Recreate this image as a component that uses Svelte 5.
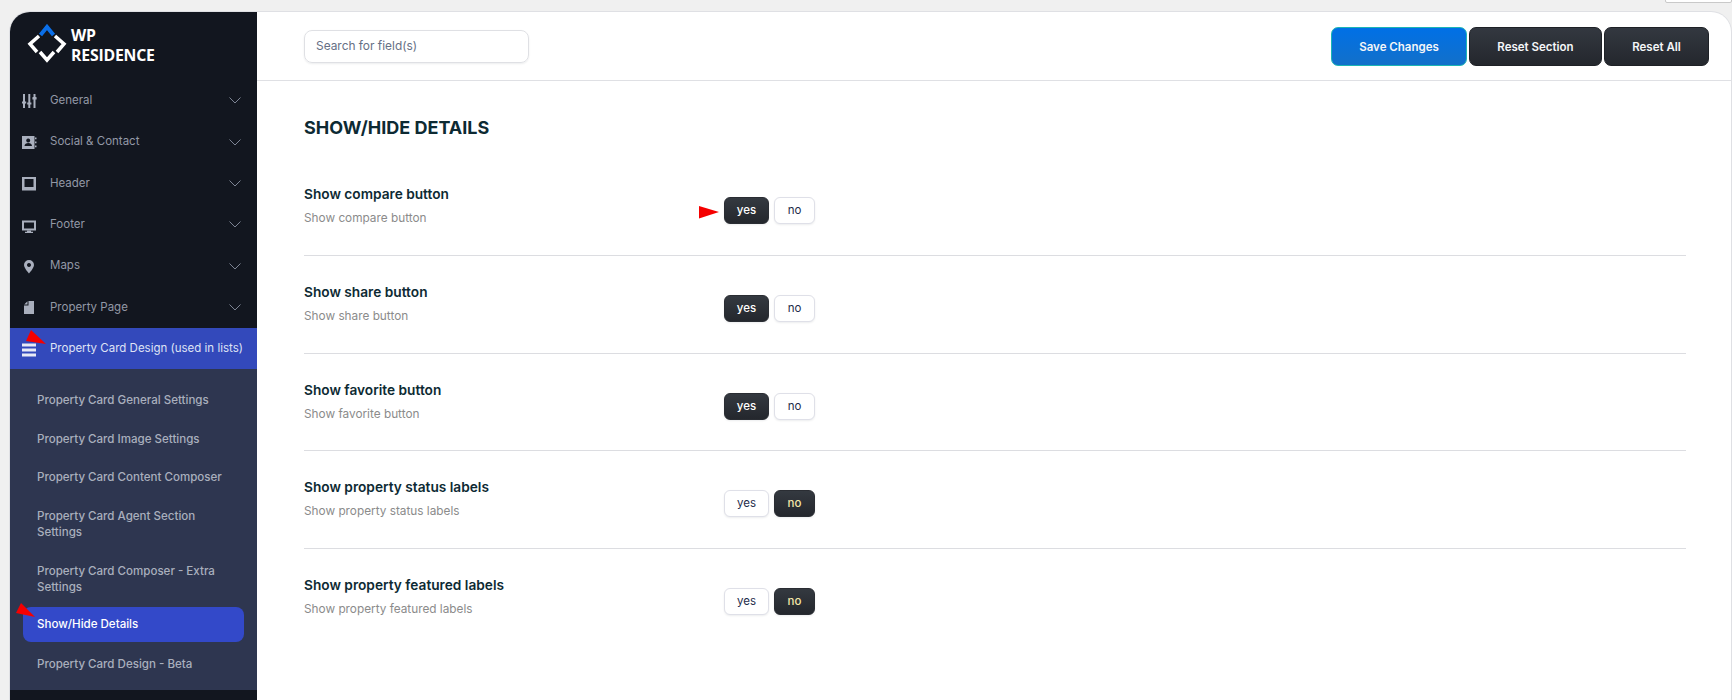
<script>
  const nav = [
    { label: 'General', icon: 'sliders' },
    { label: 'Social & Contact', icon: 'contact' },
    { label: 'Header', icon: 'header' },
    { label: 'Footer', icon: 'desktop' },
    { label: 'Maps', icon: 'pin' },
    { label: 'Property Page', icon: 'file' }
  ];
  const sub = [
    { label: 'Property Card General Settings' },
    { label: 'Property Card Image Settings' },
    { label: 'Property Card Content Composer' },
    { label: 'Property Card Agent Section Settings' },
    { label: 'Property Card Composer - Extra Settings' },
    { label: 'Show/Hide Details', active: true },
    { label: 'Property Card Design - Beta' }
  ];
  const rows = [
    { title: 'Show compare button', yes: true },
    { title: 'Show share button', yes: true },
    { title: 'Show favorite button', yes: true },
    { title: 'Show property status labels', yes: false },
    { title: 'Show property featured labels', yes: false }
  ];
</script>

<div class="chip"></div>
<div class="page">
  <div class="frame">
    <aside class="side">
      <div class="logo">
        <svg width="42" height="42" viewBox="27 24 42 42">
          <path d="M40.500 35 47 27 53.500 35" fill="none" stroke="#0b6fe8" stroke-width="4" />
          <path d="M39 36 30 44 37 52M55 36 64 44 57 52M40 52 47 60 54 52" fill="none" stroke="#fff" stroke-width="3.500" />
        </svg>
        <div class="logotext">WP<br />RESIDENCE</div>
      </div>
      <nav>
        {#each nav as n}
          <div class="item">
            <svg class="ico" width="16" height="16" viewBox="0 0 16 16" fill="#a9afbd">
              {#if n.icon === 'sliders'}
                <path d="M2 1h2v14h-2zM7.300 1h2v14h-2zM12.500 1h2v14h-2zM1 8.500h4.200v2h-1l-1.100 1.500-1.100-1.500h-1zM6.200 9.500h4.200v2h-1l-1.100 1.500-1.100-1.500h-1zM11.400 6.500v-2l2.100-2.500 2.100 2.500v2z" />
              {:else if n.icon === 'contact'}
                <path fill-rule="evenodd" d="M1 1h12.500v13h-12.500zM7.200 3.500a2 2 0 1 0 .01 0zM3.500 11h7.500c0-2-1.700-3-3.700-3s-3.800 1-3.800 3z" /><path d="M14 2.500h1.500v1.800h-1.500zM14 6.500h1.500v1.800h-1.500zM14 10.500h1.500v1.800h-1.500z" />
              {:else if n.icon === 'header'}
                <path fill-rule="evenodd" d="M1 1h14v13.500h-14zM3.500 3v8h9v-8z" />
              {:else if n.icon === 'desktop'}
                <path fill-rule="evenodd" d="M1 2.500h14v10h-14zM3 4.500v6h10v-6z" /><path d="M6 12.500h4v1.200h2v1.300h-8v-1.300h2z" />
              {:else if n.icon === 'pin'}
                <path fill-rule="evenodd" d="M8 1a5 5 0 0 0-5 5c0 3 5 8.500 5 8.500s5-5.500 5-8.500a5 5 0 0 0-5-5zM8 4a2 2 0 1 1-.01 0z" />
              {:else}
                <path d="M7.500 1h5.500v13h-10v-8.500h4.500zM6.500 1.200v3.300h-3.300z" />
              {/if}
            </svg>
            <span>{n.label}</span>
            <svg class="chev" width="12" height="7" viewBox="0 0 12 7"><path d="M.5.500 6 6 11.500.5" fill="none" stroke="#7d8494" stroke-width="1" /></svg>
          </div>
        {/each}
        <div class="item open">
          <svg class="ico" width="16" height="16" viewBox="0 0 16 16" fill="#e8eaf5"><path d="M1 1.500h14v3h-14zM1 6.500h14v3h-14zM1 11.500h14v3h-14z" /></svg>
          <span>Property Card Design (used in lists)</span>
          <svg class="mark mark1" width="21" height="15" viewBox="0 0 21 15"><path d="M5 0 0 11 20 14z" fill="#f50000" /></svg>
        </div>
        <div class="subnav">
          {#each sub as s}
            <div class="subitem" class:active={s.active}>
              {s.label}
              {#if s.active}
                <svg class="mark mark2" width="20" height="15" viewBox="0 0 20 15"><path d="M5 0 0 10 19 14z" fill="#f50000" /></svg>
              {/if}
            </div>
          {/each}
        </div>
      </nav>
    </aside>
    <main>
      <header class="top">
        <div class="search">Search for field(s)</div>
        <div class="actions">
          <button class="btn save">Save Changes</button>
          <button class="btn reset rs">Reset Section</button>
          <button class="btn reset ra">Reset All</button>
        </div>
      </header>
      <section class="content">
        <h1>SHOW/HIDE DETAILS</h1>
        {#each rows as r, i}
          <div class="row">
            <div class="info">
              <div class="title">{r.title}</div>
              <div class="desc">{r.title}</div>
            </div>
            <div class="toggle">
              {#if i === 0}
                <svg class="arrow" width="21" height="13" viewBox="0 0 21 13"><path d="M0 0 20 6 0 12.500z" fill="#f50000" /></svg>
              {/if}
              <span class="opt yes" class:on={r.yes}>yes</span>
              <span class="opt no" class:on={!r.yes}>no</span>
            </div>
          </div>
        {/each}
      </section>
    </main>
  </div>
</div>

<style>
  :global(body) {
    margin: 0;
    background: #f0f0f0;
    font-family: Inter, "Liberation Sans", sans-serif;
    overflow: hidden;
  }
  .chip {
    position: absolute;
    left: 1665px;
    top: -6px;
    width: 65px;
    height: 7px;
    background: #fff;
    border: 1px solid #c9c9c9;
    border-radius: 2px;
  }
  .page {
    height: 700px;
    padding: 12px 0 0 10px;
    box-sizing: border-box;
    overflow: hidden;
  }
  .frame {
    display: flex;
    width: 1721px;
    height: 720px;
    background: #fff;
    border-top-left-radius: 20px;
    border-top-right-radius: 20px;
    box-shadow: 0 0 0 1px #dfe0e4;
    overflow: hidden;
  }
  .side {
    width: 247px;
    flex: none;
    background: #12161f;
    color: #9298a6;
  }
  .logo {
    height: 58.200px;
    padding: 9px 0 0 17px;
    display: flex;
    gap: 2px;
  }
  .logo svg { margin-top: 3px; }
  .logotext {
    font-family: "Open Sans", sans-serif;
    font-weight: 700;
    font-size: 15.800px;
    line-height: 20px;
    color: #fff;
    padding-top: 4px;
    letter-spacing: -0.2px;
  }
  .item {
    height: 41.400px;
    display: flex;
    align-items: center;
    padding-left: 11px;
    font-size: 11.500px;
    position: relative;
  }
  .item span { margin-left: 13px; }
  .ico { flex: none; margin-top: 3px; }
  .chev { position: absolute; left: 219px; top: 18px; }
  .open {
    background: #3349bb;
    color: #dfe3f5;
    height: 41.400px;
  }
  .mark { position: absolute; }
  .mark1 { left: 16px; top: 2px; }
  .subnav {
    background: #2e3650;
    padding: 13px 13px 9px;
    height: 321px;
    box-sizing: border-box;
  }
  .subitem {
    padding: 10px 14px;
    font-size: 11.550px;
    line-height: 16px;
    font-weight: 500;
    color: #a9afbd;
    border-radius: 8px;
    position: relative;
    margin-bottom: 2.700px;
  }
  .active {
    background: #3349c9;
    color: #fff;
    height: 35px;
    box-sizing: border-box;
    padding: 9px 14px;
    margin-top: 2px;
    margin-bottom: 3.700px;
  }
  .mark2 { left: -7px; top: -4px; }
  main { flex: 1; min-width: 0; }
  .top {
    height: 68px;
    border-bottom: 1px solid #dfe0e4;
    display: flex;
    align-items: center;
    justify-content: space-between;
    padding: 0 22px 0 47px;
  }
  .search {
    width: 225px;
    height: 33px;
    margin-top: 1px;
    box-sizing: border-box;
    border: 1px solid #dfe0e4;
    border-radius: 8px;
    box-shadow: 0 1px 2px rgba(16, 24, 40, 0.08);
    padding: 0 11px;
    line-height: 29px;
    font-size: 11.900px;
    color: #667085;
  }
  .actions { display: flex; gap: 2px; margin-top: 1px; }
  .btn {
    height: 39px;
    border-radius: 7px;
    font: 600 11.500px Inter, sans-serif;
    color: #f5f6f8;
    padding: 0;
    cursor: pointer;
  }
  .save {
    width: 136px;
    background: linear-gradient(#0070e6, #1370c9);
    border: 1px solid #1cb5b5;
  }
  .reset {
    background: linear-gradient(#333840, #24272d);
    border: 1px solid #1e2126;
  }
  .rs { width: 133px; }
  .ra { width: 105px; }
  .content { padding: 0 45px 0 47px; }
  h1 {
    margin: 0;
    padding-top: 37px;
    height: 40.400px;
    font-size: 18px;
    line-height: 20px;
    font-weight: 700;
    color: #0d2a33;
  }
  .row {
    height: 97.600px;
    box-sizing: border-box;
    padding-top: 27px;
    border-bottom: 1px solid #dcdde1;
    display: flex;
    position: relative;
  }
  .row:last-child { border-bottom: 0; }
  .info { width: 420px; }
  .title {
    font-size: 13.700px;
    line-height: 18px;
    font-weight: 600;
    color: #0d2a33;
  }
  .desc {
    font-size: 11.800px;
    line-height: 16px;
    margin-top: 7px;
    color: #8b8b8b;
  }
  .toggle {
    display: flex;
    gap: 5px;
    padding-top: 12px;
    height: 28px;
    position: relative;
  }
  .arrow { position: absolute; left: -25px; top: 20.600px; }
  .opt {
    height: 27px;
    box-sizing: border-box;
    border-radius: 6px;
    border: 1px solid #dfe0e8;
    background: #fff;
    color: #1d2b4a;
    font-size: 11.500px;
    line-height: 25px;
    text-align: center;
    box-shadow: 0 1px 2px rgba(16, 24, 40, 0.08);
  }
  .yes { width: 45px; }
  .no { width: 41px; }
  .on {
    background: linear-gradient(#343940, #24272d);
    border-color: #2a2d33;
    color: #fff;
    font-weight: 500;
  }
  .no.on { color: #f5e7a8; }
</style>
